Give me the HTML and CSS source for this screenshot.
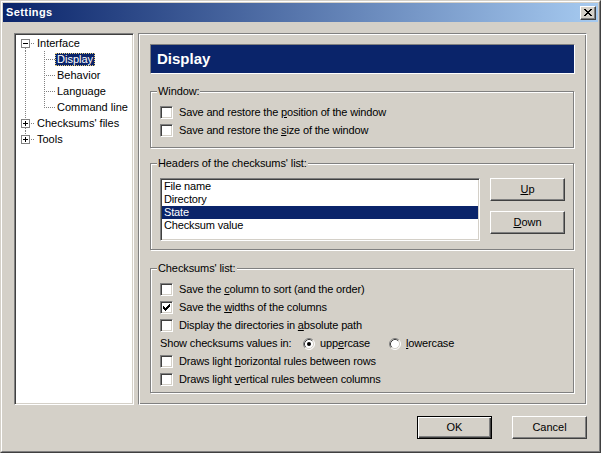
FILE: index.html
```html
<!DOCTYPE html>
<html>
<head>
<meta charset="utf-8">
<title>Settings</title>
<link rel="stylesheet" href="styles.css">
</head>
<body>
<div class="window">
  <div class="frame">
    <div class="titlebar">
      <span class="title">Settings</span>
      <button class="close" type="button" aria-label="Close">
        <svg width="8" height="7" viewBox="0 0 8 7"><path fill="#000" d="M0 0h2v1h-2zM6 0h2v1h-2zM1 1h2v1h-2zM5 1h2v1h-2zM2 2h4v1h-4zM3 3h2v1h-2zM2 4h4v1h-4zM1 5h2v1h-2zM5 5h2v1h-2zM0 6h2v1h-2zM6 6h2v1h-2z"/></svg>
      </button>
    </div>
    <div class="client">
      <div class="main">
        <div class="tree">
          <div class="node">
            <svg class="gut-root" width="19" height="16" viewBox="0 0 19 16">
              <rect x="5.5" y="4.5" width="8" height="8" fill="#fff" stroke="#808080"/>
              <path d="M7 8.5H12" stroke="#000"/>
              <path class="dot" d="M15 8.5H19M9.5 13V16"/>
            </svg>
            <span class="lbl">Interface</span>
          </div>
          <div class="node">
            <svg class="gut-child" width="39" height="16" viewBox="0 0 39 16">
              <path class="dot" d="M9.5 0V16M28.5 0V16M30 8.5H39"/>
            </svg>
            <span class="lbl sel">Display</span>
          </div>
          <div class="node">
            <svg class="gut-child" width="39" height="16" viewBox="0 0 39 16">
              <path class="dot" d="M9.5 0V16M28.5 0V16M30 8.5H39"/>
            </svg>
            <span class="lbl">Behavior</span>
          </div>
          <div class="node">
            <svg class="gut-child" width="39" height="16" viewBox="0 0 39 16">
              <path class="dot" d="M9.5 0V16M28.5 0V16M30 8.5H39"/>
            </svg>
            <span class="lbl">Language</span>
          </div>
          <div class="node">
            <svg class="gut-child" width="39" height="16" viewBox="0 0 39 16">
              <path class="dot" d="M9.5 0V16M28.5 0V9M30 8.5H39"/>
            </svg>
            <span class="lbl">Command line</span>
          </div>
          <div class="node">
            <svg class="gut-root" width="19" height="16" viewBox="0 0 19 16">
              <rect x="5.5" y="4.5" width="8" height="8" fill="#fff" stroke="#808080"/>
              <path d="M7 8.5H12M9.5 6V11" stroke="#000"/>
              <path class="dot" d="M15 8.5H19M9.5 0V4M9.5 13V16"/>
            </svg>
            <span class="lbl">Checksums' files</span>
          </div>
          <div class="node">
            <svg class="gut-root" width="19" height="16" viewBox="0 0 19 16">
              <rect x="5.5" y="4.5" width="8" height="8" fill="#fff" stroke="#808080"/>
              <path d="M7 8.5H12M9.5 6V11" stroke="#000"/>
              <path class="dot" d="M15 8.5H19M9.5 0V4"/>
            </svg>
            <span class="lbl">Tools</span>
          </div>
        </div>

        <div class="panel">
          <div class="header">Display</div>

          <fieldset class="group g-window">
            <legend>Window:</legend>
            <div class="row"><span class="cb"></span><span class="txt">Save and restore the <u>p</u>osition of the window</span></div>
            <div class="row"><span class="cb"></span><span class="txt">Save and restore the <u>s</u>ize of the window</span></div>
          </fieldset>

          <fieldset class="group g-headers">
            <legend>Headers of the checksums' list:</legend>
            <div class="hrow">
              <div class="listbox">
                <div class="item">File name</div>
                <div class="item">Directory</div>
                <div class="item selected">State</div>
                <div class="item">Checksum value</div>
              </div>
              <div class="side">
                <button class="btn" type="button"><u>U</u>p</button>
                <button class="btn" type="button"><u>D</u>own</button>
              </div>
            </div>
          </fieldset>

          <fieldset class="group g-list">
            <legend>Checksums' list:</legend>
            <div class="row"><span class="cb"></span><span class="txt">Save the <u>c</u>olumn to sort (and the order)</span></div>
            <div class="row"><span class="cb"><svg width="7" height="7" viewBox="0 0 7 7"><path fill="#000" d="M6 0h1v1h-1zM5 1h2v1h-2zM0 2h1v1h-1zM4 2h3v1h-3zM0 3h2v1h-2zM3 3h3v1h-3zM0 4h5v1h-5zM1 5h3v1h-3zM2 6h1v1h-1z"/></svg></span><span class="txt">Save the <u>w</u>idths of the columns</span></div>
            <div class="row"><span class="cb"></span><span class="txt">Display the directories in <u>a</u>bsolute path</span></div>
            <div class="row">
              <span class="txt show">Show checksums values in:</span>
              <span class="opt opt1">
                <svg class="radio" width="12" height="12" viewBox="0 0 12 12">
                  <circle cx="6" cy="6" r="5" fill="#fff"/>
                  <path d="M2.11 9.89A5.5 5.5 0 0 1 9.89 2.11" fill="none" stroke="#808080"/>
                  <path d="M9.89 2.11A5.5 5.5 0 0 1 2.11 9.89" fill="none" stroke="#fff"/>
                  <path d="M2.82 9.18A4.5 4.5 0 0 1 9.18 2.82" fill="none" stroke="#404040"/>
                  <path d="M9.18 2.82A4.5 4.5 0 0 1 2.82 9.18" fill="none" stroke="#d4d0c8"/>
                  <circle cx="6" cy="6" r="2" fill="#000"/>
                </svg>
                <span class="otxt">upp<u>e</u>rcase</span>
              </span>
              <span class="opt">
                <svg class="radio" width="12" height="12" viewBox="0 0 12 12">
                  <circle cx="6" cy="6" r="5" fill="#fff"/>
                  <path d="M2.11 9.89A5.5 5.5 0 0 1 9.89 2.11" fill="none" stroke="#808080"/>
                  <path d="M9.89 2.11A5.5 5.5 0 0 1 2.11 9.89" fill="none" stroke="#fff"/>
                  <path d="M2.82 9.18A4.5 4.5 0 0 1 9.18 2.82" fill="none" stroke="#404040"/>
                  <path d="M9.18 2.82A4.5 4.5 0 0 1 2.82 9.18" fill="none" stroke="#d4d0c8"/>
                </svg>
                <span class="otxt"><u>l</u>owercase</span>
              </span>
            </div>
            <div class="row"><span class="cb"></span><span class="txt">Draws light <u>h</u>orizontal rules between rows</span></div>
            <div class="row"><span class="cb"></span><span class="txt">Draws light <u>v</u>ertical rules between columns</span></div>
          </fieldset>
        </div>
      </div>
      <div class="footer">
        <button class="btn default" type="button">OK</button>
        <button class="btn" type="button">Cancel</button>
      </div>
    </div>
  </div>
</div>
</body>
</html>
```

FILE: styles.css
```css
* { box-sizing: border-box; }
html, body { margin: 0; padding: 0; }
body {
  background: #d4d0c8;
  font-family: "Liberation Sans", Arial, sans-serif;
  font-size: 11px;
  color: #000;
}
u { text-underline-offset: 1px; }

.window {
  width: 601px;
  height: 453px;
  border: 1px solid;
  border-color: #d4d0c8 #404040 #404040 #d4d0c8;
  background: #d4d0c8;
}
.frame {
  height: 100%;
  border: 1px solid;
  border-color: #fff #808080 #808080 #fff;
  padding: 1px;
  display: flex;
  flex-direction: column;
}

.titlebar {
  height: 19px;
  flex: none;
  display: flex;
  align-items: flex-start;
  background: linear-gradient(to right, #0a246a, #a6caf0);
}
.title {
  flex: 1;
  color: #fff;
  font-weight: bold;
  font-size: 11px;
  letter-spacing: 0.4px;
  line-height: 19px;
  padding-left: 3px;
}
.close {
  width: 16px;
  height: 14px;
  margin: 3px 2px 0 0;
  padding: 0;
  border: 1px solid;
  border-color: #fff #404040 #404040 #fff;
  box-shadow: inset -1px -1px 0 #808080, inset 1px 1px 0 #d4d0c8;
  background: #d4d0c8;
  display: flex;
  align-items: flex-start;
}
.close svg { display: block; margin: 2px 0 0 3px; }

.client {
  flex: 1;
  padding: 11px;
  display: flex;
  flex-direction: column;
}
.main {
  height: 372px;
  display: flex;
  gap: 4px;
}

/* tree */
.tree {
  width: 120px;
  height: 372px;
  border: 1px solid;
  border-color: #808080 #fff #fff #808080;
  box-shadow: inset 1px 1px 0 #404040, inset -1px -1px 0 #d4d0c8;
  background: #fff;
  padding: 1px;
}
.node {
  height: 16px;
  display: flex;
  align-items: center;
  white-space: nowrap;
}
.node svg { display: block; flex: none; }
.dot { stroke: #808080; stroke-dasharray: 1 1; fill: none; }
.lbl {
  line-height: 13px;
  padding: 0 2px;
}
.lbl.sel {
  background: #0a246a;
  color: #fff;
  outline: 1px dotted #e8cf7a;
  outline-offset: -1px;
}

/* right panel */
.panel {
  width: 449px;
  height: 372px;
  border: 1px solid;
  border-color: #808080 #fff #fff #808080;
  box-shadow: inset 1px 1px 0 #fff, inset -1px -1px 0 #808080;
  padding: 10px 11px 0 11px;
}
.header {
  height: 30px;
  border: 1px solid;
  border-color: #808080 #fff #fff #808080;
  background: #0a246a;
  color: #fff;
  font-weight: bold;
  font-size: 15px;
  line-height: 28px;
  padding-left: 6px;
}

.group {
  margin: 0 1px 0 0;
  min-width: 0;
  border: 1px solid #808080;
  box-shadow: inset 1px 1px 0 #fff, 1px 1px 0 #fff;
}
.group legend {
  margin-left: -3px;
  padding: 0 1px;
  line-height: 13px;
  background: #d4d0c8;
  letter-spacing: -0.1px;
}
.g-window { margin-top: 11px; padding: 6px 0 7px 9px; }
.g-headers { margin-top: 9px; padding: 8px 8px 8px 9px; }
.g-list { margin-top: 12px; padding: 6px 0 3px 9px; }

.row {
  height: 18px;
  display: flex;
  align-items: flex-start;
  white-space: nowrap;
}
.cb {
  flex: none;
  width: 13px;
  height: 13px;
  margin-top: 2px;
  border: 1px solid;
  border-color: #808080 #fff #fff #808080;
  box-shadow: inset 1px 1px 0 #404040, inset -1px -1px 0 #d4d0c8;
  background: #fff;
  padding: 2px;
}
.cb svg { display: block; }
.txt {
  margin-top: 2px;
  margin-left: 6px;
  line-height: 13px;
  letter-spacing: -0.15px;
}
.txt.show { margin-left: 0; width: 143px; }
.opt {
  display: flex;
  align-items: flex-start;
}
.opt1 { width: 86px; }
.radio { display: block; flex: none; margin-top: 3px; }
.otxt {
  margin-top: 2px;
  margin-left: 5px;
  line-height: 13px;
  letter-spacing: -0.15px;
}

.hrow { display: flex; align-items: flex-start; }
.listbox {
  width: 320px;
  height: 63px;
  border: 1px solid;
  border-color: #808080 #fff #fff #808080;
  box-shadow: inset 1px 1px 0 #404040, inset -1px -1px 0 #d4d0c8;
  background: #fff;
  padding: 1px;
}
.item {
  line-height: 13px;
  padding-left: 2px;
  letter-spacing: -0.15px;
}
.item.selected { background: #0a246a; color: #fff; }
.side {
  margin-left: 10px;
  display: flex;
  flex-direction: column;
  gap: 10px;
}

.btn {
  width: 75px;
  height: 23px;
  padding: 0;
  border: 1px solid;
  border-color: #fff #404040 #404040 #fff;
  box-shadow: inset -1px -1px 0 #808080, inset 1px 1px 0 #d4d0c8;
  background: #d4d0c8;
  font-family: "Liberation Sans", Arial, sans-serif;
  font-size: 11px;
  color: #000;
  line-height: 13px;
}
.btn.default {
  border-color: #000;
  box-shadow: inset 1px 1px 0 #fff, inset -1px -1px 0 #404040, inset -2px -2px 0 #808080;
}

.footer {
  margin-top: 11px;
  height: 23px;
  display: flex;
  justify-content: flex-end;
  gap: 20px;
}
```
